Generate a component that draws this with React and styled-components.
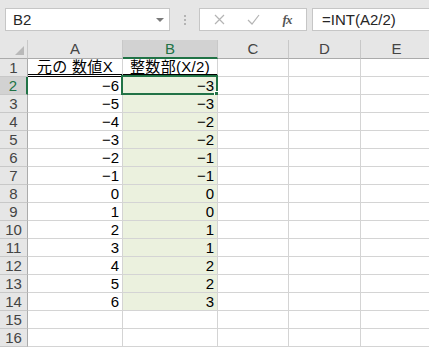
import React from "react"
import styled, { createGlobalStyle } from "styled-components"

const GlobalStyle = createGlobalStyle`
    html, body {
        margin: 0;
        padding: 0;
        background: #ffffff;
        overflow: hidden;
    }
    body {
        font-family: "Liberation Sans", "Noto Sans CJK JP", sans-serif;
        line-height: 16px;
    }
`

const COLS = ["A", "B", "C", "D", "E"]
const WIDTHS = "28px 95px 95px 71px 72px 72px"
const SOURCE = [-6, -5, -4, -3, -2, -1, 0, 1, 2, 3, 4, 5, 6]

const fmt = (n) => (n < 0 ? "\u2212" + Math.abs(n) : String(n))

const Page = styled.div`
    width: 429px;
    height: 349px;
    overflow: hidden;
    background: #ffffff;
`
const FormulaBar = styled.div`
    display: flex;
    align-items: center;
    height: 40px;
    padding: 0 0 0 5px;
    background: #e6e6e6;
    box-sizing: border-box;
`
const NameBox = styled.div`
    display: flex;
    align-items: center;
    justify-content: space-between;
    width: 165px;
    height: 23px;
    margin-top: -1px;
    padding: 0 5px 0 7px;
    box-sizing: border-box;
    background: #ffffff;
    border: 1px solid #c6c6c6;
    font-size: 15px;
    color: #262626;
`
const Caret = styled.span`
    width: 0;
    height: 0;
    border-left: 4px solid transparent;
    border-right: 4px solid transparent;
    border-top: 4px solid #7a7a7a;
`
const Dots = styled.div`
    display: flex;
    flex-direction: column;
    gap: 2px;
    margin: -1px 13px 0 14px;
    span {
        width: 2px;
        height: 2px;
        background: #b4b4b4;
    }
`
const IconBox = styled.div`
    display: flex;
    align-items: center;
    width: 108px;
    height: 23px;
    margin-top: -1px;
    box-sizing: border-box;
    background: #ffffff;
    border: 1px solid #c6c6c6;
`
const IconSlot = styled.span`
    display: flex;
    align-items: center;
    justify-content: center;
    width: ${(p) => p.$w}px;
`
const Fx = styled.span`
    font-family: "Liberation Serif", "DejaVu Serif", serif;
    font-style: italic;
    font-weight: bold;
    font-size: 13px;
    color: #555555;
    letter-spacing: -1px;
`
const FormulaInput = styled.div`
    flex: 1;
    display: flex;
    align-items: center;
    height: 23px;
    margin: -1px 0 0 5px;
    padding-left: 9px;
    box-sizing: border-box;
    background: #ffffff;
    border: 1px solid #c6c6c6;
    border-right: none;
    font-size: 15px;
    color: #262626;
`
const Grid = styled.div`
    display: grid;
    grid-template-columns: ${WIDTHS};
    grid-auto-rows: 18px;
`
const HeadRow = styled.div`
    display: grid;
    grid-template-columns: ${WIDTHS};
    height: 19px;
`
const Corner = styled.div`
    position: relative;
    background: #e6e6e6;
    border-right: 1px solid #c8c8c8;
    border-bottom: 1px solid #ababab;
    &::after {
        content: "";
        position: absolute;
        right: 3px;
        bottom: 3px;
        width: 0;
        height: 0;
        border-left: 9px solid transparent;
        border-bottom: 9px solid #b9b9b9;
    }
`
const ColHead = styled.div`
    display: flex;
    align-items: center;
    justify-content: center;
    font-size: 15px;
    color: ${(p) => (p.$active ? "#217346" : "#444444")};
    background: ${(p) => (p.$active ? "#d2d2d2" : "#e6e6e6")};
    border-right: 1px solid #c8c8c8;
    border-bottom: ${(p) => (p.$active ? "2px solid #217346" : "1px solid #ababab")};
`
const RowHead = styled.div`
    display: flex;
    align-items: center;
    justify-content: center;
    font-size: 15px;
    color: ${(p) => (p.$active ? "#217346" : "#444444")};
    background: ${(p) => (p.$active ? "#d2d2d2" : "#e6e6e6")};
    border-right: ${(p) => (p.$active ? "2px solid #217346" : "1px solid #ababab")};
    border-bottom: 1px solid #c8c8c8;
`
const Cell = styled.div`
    position: relative;
    display: flex;
    align-items: center;
    justify-content: ${(p) => (p.$center ? "center" : "flex-end")};
    padding: 0 3px;
    font-size: 15px;
    color: #000000;
    white-space: nowrap;
    letter-spacing: ${(p) => (p.$center ? "0.3px" : "0")};
    background: ${(p) => (p.$fill ? "#ebf1de" : "#ffffff")};
    border-right: 1px solid #d4d4d4;
    border-bottom: ${(p) => (p.$double ? "3px double #000000" : "1px solid #d4d4d4")};
`
const Selection = styled.div`
    position: absolute;
    left: -2px;
    top: -2px;
    right: -1px;
    bottom: -1px;
    border: 2px solid #217346;
    pointer-events: none;
    &::after {
        content: "";
        position: absolute;
        right: -5px;
        bottom: -5px;
        width: 5px;
        height: 5px;
        background: #217346;
        border: 1px solid #ffffff;
    }
`

const CrossIcon = () => (
    <svg width="11" height="11" viewBox="0 0 11 11">
        <path d="M1 1 L10 10 M10 1 L1 10" stroke="#b4b4b4" strokeWidth="1.2" fill="none" />
    </svg>
)
const CheckIcon = () => (
    <svg width="13" height="11" viewBox="0 0 13 11">
        <path d="M1 6 L5 10 L12 1" stroke="#b4b4b4" strokeWidth="1.2" fill="none" />
    </svg>
)

const App = () => {
    const rows = []
    for (let r = 1; r <= 16; r++) {
        let a = ""
        let b = ""
        if (r === 1) {
            a = "元の 数値X"
            b = "整数部(X/2)"
        } else if (r <= 14) {
            const x = SOURCE[r - 2]
            a = fmt(x)
            b = fmt(Math.floor(x / 2))
        }
        rows.push(
            <React.Fragment key={r}>
                <RowHead $active={r === 2}>{r}</RowHead>
                <Cell $center={r === 1} $double={r === 1}>{a}</Cell>
                <Cell $center={r === 1} $double={r === 1} $fill={r >= 2 && r <= 14}>
                    {b}
                    {r === 2 && <Selection />}
                </Cell>
                <Cell />
                <Cell />
                <Cell />
            </React.Fragment>
        )
    }

    return (
        <Page>
            <GlobalStyle />
            <FormulaBar>
                <NameBox>
                    B2
                    <Caret />
                </NameBox>
                <Dots>
                    <span />
                    <span />
                    <span />
                </Dots>
                <IconBox>
                    <IconSlot $w={38}>
                        <CrossIcon />
                    </IconSlot>
                    <IconSlot $w={30}>
                        <CheckIcon />
                    </IconSlot>
                    <IconSlot $w={38}>
                        <Fx>fx</Fx>
                    </IconSlot>
                </IconBox>
                <FormulaInput>=INT(A2/2)</FormulaInput>
            </FormulaBar>
            <HeadRow>
                <Corner />
                {COLS.map((c) => (
                    <ColHead key={c} $active={c === "B"}>
                        {c}
                    </ColHead>
                ))}
            </HeadRow>
            <Grid>{rows}</Grid>
        </Page>
    )
}
export default App
